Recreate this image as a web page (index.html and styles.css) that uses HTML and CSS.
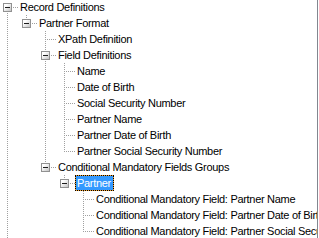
FILE: index.html
```html
<!DOCTYPE html>
<html>
<head>
<meta charset="utf-8">
<link rel="stylesheet" href="styles.css">
</head>
<body>
<div class="frame">
  <div class="tree">
    <div class="row">
      <span class="c down"><span class="box"></span></span>
      <span class="label">Record Definitions</span>
    </div>
    <div class="row">
      <span class="g v"></span>
      <span class="c up"><span class="box"></span></span>
      <span class="label">Partner Format</span>
    </div>
    <div class="row">
      <span class="g v"></span><span class="g"></span>
      <span class="c full"></span>
      <span class="label">XPath Definition</span>
    </div>
    <div class="row">
      <span class="g v"></span><span class="g"></span>
      <span class="c full"><span class="box"></span></span>
      <span class="label">Field Definitions</span>
    </div>
    <div class="row">
      <span class="g v"></span><span class="g"></span><span class="g v"></span>
      <span class="c full"></span>
      <span class="label">Name</span>
    </div>
    <div class="row">
      <span class="g v"></span><span class="g"></span><span class="g v"></span>
      <span class="c full"></span>
      <span class="label">Date of Birth</span>
    </div>
    <div class="row">
      <span class="g v"></span><span class="g"></span><span class="g v"></span>
      <span class="c full"></span>
      <span class="label">Social Security Number</span>
    </div>
    <div class="row">
      <span class="g v"></span><span class="g"></span><span class="g v"></span>
      <span class="c full"></span>
      <span class="label">Partner Name</span>
    </div>
    <div class="row">
      <span class="g v"></span><span class="g"></span><span class="g v"></span>
      <span class="c full"></span>
      <span class="label">Partner Date of Birth</span>
    </div>
    <div class="row">
      <span class="g v"></span><span class="g"></span><span class="g v"></span>
      <span class="c up"></span>
      <span class="label">Partner Social Security Number</span>
    </div>
    <div class="row">
      <span class="g v"></span><span class="g"></span>
      <span class="c up"><span class="box"></span></span>
      <span class="label">Conditional Mandatory Fields Groups</span>
    </div>
    <div class="row">
      <span class="g v"></span><span class="g"></span><span class="g"></span>
      <span class="c up"><span class="box"></span></span>
      <span class="label selected"><span class="sel-inner">Partner</span></span>
    </div>
    <div class="row">
      <span class="g v"></span><span class="g"></span><span class="g"></span><span class="g"></span>
      <span class="c full"></span>
      <span class="label">Conditional Mandatory Field: Partner Name</span>
    </div>
    <div class="row">
      <span class="g v"></span><span class="g"></span><span class="g"></span><span class="g"></span>
      <span class="c full"></span>
      <span class="label">Conditional Mandatory Field: Partner Date of Birth</span>
    </div>
    <div class="row">
      <span class="g v"></span><span class="g"></span><span class="g"></span><span class="g"></span>
      <span class="c up"></span>
      <span class="label">Conditional Mandatory Field: Partner Social Security Number</span>
    </div>
  </div>
</div>
</body>
</html>
```

FILE: styles.css
```css
html, body {
  margin: 0;
  padding: 0;
  background: #ffffff;
}

.frame {
  width: 317px;
  height: 238px;
  border-right: 1px solid #828790;
  overflow: hidden;
  background: #ffffff;
  font-family: "Liberation Sans", Arial, sans-serif;
  font-size: 11px;
  letter-spacing: -0.3px;
  color: #000000;
}

.tree {
  margin-top: -1px;
  display: flex;
  flex-direction: column;
}

.row {
  display: flex;
  height: 16px;
  white-space: nowrap;
}

.g,
.c {
  flex: none;
  height: 16px;
  background-repeat: no-repeat;
}

.g {
  width: 19px;
}

.c {
  width: 18px;
  display: flex;
  align-items: flex-start;
}

.g.v {
  background-image: repeating-linear-gradient(to bottom, #a0a0a0 0 1px, transparent 1px 2px);
  background-size: 1px 16px;
  background-position: 7px 0;
}

.c.full {
  background-image:
    repeating-linear-gradient(to bottom, #a0a0a0 0 1px, transparent 1px 2px),
    repeating-linear-gradient(to right, #a0a0a0 0 1px, transparent 1px 2px);
  background-size: 1px 16px, 11px 1px;
  background-position: 7px 0, 7px 8px;
}

.c.up {
  background-image:
    repeating-linear-gradient(to bottom, #a0a0a0 0 1px, transparent 1px 2px),
    repeating-linear-gradient(to right, #a0a0a0 0 1px, transparent 1px 2px);
  background-size: 1px 9px, 11px 1px;
  background-position: 7px 0, 7px 8px;
}

.c.down {
  background-image:
    repeating-linear-gradient(to bottom, #a0a0a0 0 1px, transparent 1px 2px),
    repeating-linear-gradient(to right, #a0a0a0 0 1px, transparent 1px 2px);
  background-size: 1px 8px, 11px 1px;
  background-position: 7px 8px, 7px 8px;
}

.box {
  width: 9px;
  height: 9px;
  box-sizing: border-box;
  margin: 4px 0 0 3px;
  border: 1px solid #919191;
  background: linear-gradient(135deg, #ffffff 25%, #e4e4e4 60%, #c4c4c4 100%);
  display: flex;
  align-items: center;
  justify-content: center;
}

.box::before {
  content: "";
  width: 5px;
  height: 1px;
  background: #1c1c1c;
}

.label {
  flex: none;
  height: 16px;
  line-height: 16px;
  padding: 0 3px 0 2px;
  box-sizing: border-box;
}

.label.selected {
  padding: 0;
  border: 1px dotted #000000;
  background: #f0a030;
  color: #ffffff;
  line-height: 14px;
  display: flex;
}

.sel-inner {
  background: #3399ff;
  padding: 0 2px 0 1px;
  height: 14px;
}
```
